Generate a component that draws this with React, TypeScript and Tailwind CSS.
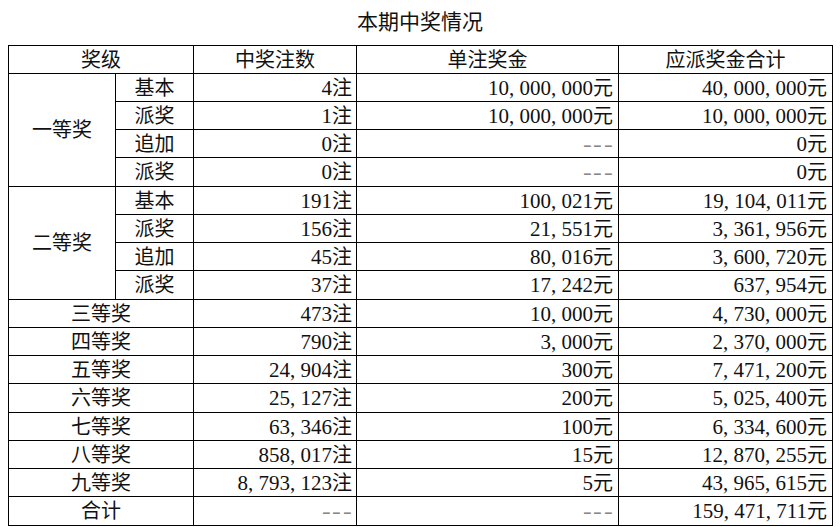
import React from "react";

type Row = {
  group?: string;
  span?: number;
  sub?: string;
  count: string;
  unit: string;
  total: string;
};

const rows: Row[] = [
  { group: "一等奖", span: 4, sub: "基本", count: "4注", unit: "10,000,000元", total: "40,000,000元" },
  { sub: "派奖", count: "1注", unit: "10,000,000元", total: "10,000,000元" },
  { sub: "追加", count: "0注", unit: "---", total: "0元" },
  { sub: "派奖", count: "0注", unit: "---", total: "0元" },
  { group: "二等奖", span: 4, sub: "基本", count: "191注", unit: "100,021元", total: "19,104,011元" },
  { sub: "派奖", count: "156注", unit: "21,551元", total: "3,361,956元" },
  { sub: "追加", count: "45注", unit: "80,016元", total: "3,600,720元" },
  { sub: "派奖", count: "37注", unit: "17,242元", total: "637,954元" },
  { group: "三等奖", count: "473注", unit: "10,000元", total: "4,730,000元" },
  { group: "四等奖", count: "790注", unit: "3,000元", total: "2,370,000元" },
  { group: "五等奖", count: "24,904注", unit: "300元", total: "7,471,200元" },
  { group: "六等奖", count: "25,127注", unit: "200元", total: "5,025,400元" },
  { group: "七等奖", count: "63,346注", unit: "100元", total: "6,334,600元" },
  { group: "八等奖", count: "858,017注", unit: "15元", total: "12,870,255元" },
  { group: "九等奖", count: "8,793,123注", unit: "5元", total: "43,965,615元" },
  { group: "合计", count: "---", unit: "---", total: "159,471,711元" },
];

// SimSun-like half-width punctuation: commas and dashes take a full digit cell
function Num({ value }: { value: string }) {
  const m = value.match(/^([\d,\-]*)(.*)$/);
  const digits = m ? m[1] : value;
  const suffix = m ? m[2] : "";
  return (
    <>
      <span className="text-[21px]">
        {digits.split("").map((ch, i) =>
          ch === "," ? (
            <span key={i} className="inline-block w-[0.5em] text-left">
              ,
            </span>
          ) : ch === "-" ? (
            <span key={i} className="inline-block w-[0.5em] text-center text-[#888] scale-x-125">
              -
            </span>
          ) : (
            <React.Fragment key={i}>{ch}</React.Fragment>
          )
        )}
      </span>
      {suffix}
    </>
  );
}

const cell = "border border-black p-0 align-middle";

export default function App() {
  return (
    <div
      className="w-[840px] h-[527px] bg-white text-[#111] overflow-hidden"
      style={{ fontFamily: "'Liberation Serif', 'Noto Sans CJK SC', serif" }}
    >
      <div className="h-[45px] pt-[8px] text-center text-[21px] leading-[28px]">本期中奖情况</div>
      <table className="ml-[8px] w-[824px] table-fixed border-collapse text-[20px] leading-[20px]">
        <colgroup>
          <col className="w-[107px]" />
          <col className="w-[78px]" />
          <col className="w-[163px]" />
          <col className="w-[262px]" />
          <col className="w-[214px]" />
        </colgroup>
        <thead>
          <tr className="h-[28px]">
            <th colSpan={2} className={`${cell} font-normal text-center`}>
              奖级
            </th>
            <th className={`${cell} font-normal text-center`}>中奖注数</th>
            <th className={`${cell} font-normal text-center`}>单注奖金</th>
            <th className={`${cell} font-normal text-center`}>应派奖金合计</th>
          </tr>
        </thead>
        <tbody>
          {rows.map((r, i) => (
            <tr key={i} className={i % 4 === 3 ? "h-[29px]" : "h-[28px]"}>
              {r.group && (
                <td
                  rowSpan={r.span}
                  colSpan={r.sub ? 1 : 2}
                  className={`${cell} text-center`}
                >
                  {r.group}
                </td>
              )}
              {r.sub && <td className={`${cell} text-center`}>{r.sub}</td>}
              <td className={`${cell} text-right pr-[4px]`}>
                <Num value={r.count} />
              </td>
              <td className={`${cell} text-right pr-[5px]`}>
                <Num value={r.unit} />
              </td>
              <td className={`${cell} text-right pr-[5px]`}>
                <Num value={r.total} />
              </td>
            </tr>
          ))}
        </tbody>
      </table>
    </div>
  );
}
